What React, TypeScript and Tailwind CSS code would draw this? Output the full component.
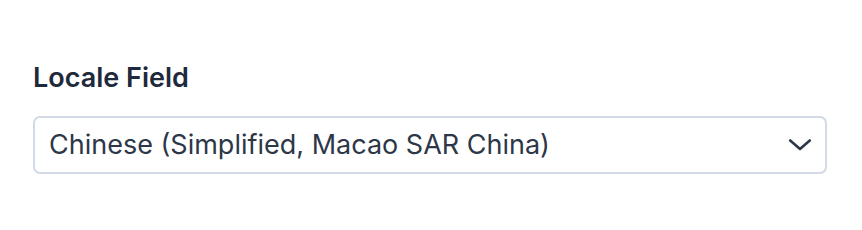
import React from "react";

export default function App() {
  return (
    <div className="w-[862px] h-[230px] bg-white" style={{ fontFamily: "Inter, 'Noto Sans', sans-serif" }}>
      <div className="pt-[60px] pl-[33px] pr-[35px]">
        <label className="block text-[27px] leading-[36px] font-semibold text-[#1e293b]">Locale Field</label>
        <div className="mt-[20px] h-[58px] w-full flex items-center justify-between border-2 border-[#d2dae6] rounded-[7px] pl-[14px] pr-[13px]">
          <span className="text-[27px] text-[#2d3748]">Chinese (Simplified, Macao SAR China)</span>
          <svg width="24" height="24" viewBox="0 0 24 24" fill="none" stroke="#2d3748" strokeWidth="2.6" strokeLinecap="round" strokeLinejoin="round">
            <path d="M2.2 7.5L12 16l9.8-8.5" />
          </svg>
        </div>
      </div>
    </div>
  );
}
